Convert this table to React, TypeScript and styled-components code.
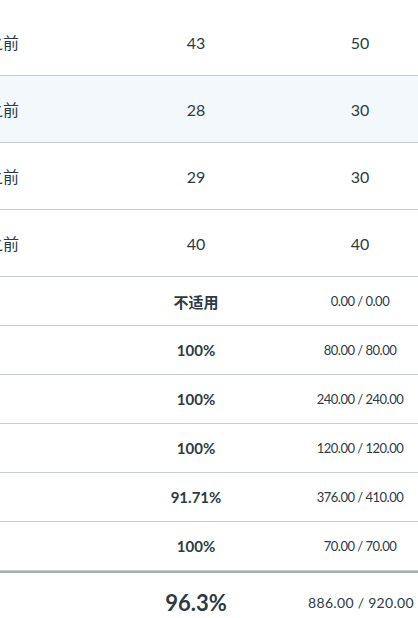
import React from "react";
import styled, { createGlobalStyle } from "styled-components";

const Global = createGlobalStyle`
  html, body { margin: 0; padding: 0; background: #fff; }
  body { font-family: Lato, "Noto Sans CJK SC", "Noto Sans", sans-serif; color: #2d3b45; overflow: hidden; }
`;

const Viewport = styled.div`
  width: 418px;
  height: 618px;
  overflow: hidden;
`;

const Table = styled.div`
  margin-left: -100px;
  width: 518px;
  padding-top: 9px;
  display: flex;
  flex-direction: column;
`;

const Row = styled.div<{ $h: number; $shaded?: boolean; $thick?: boolean }>`
  display: grid;
  grid-template-columns: 190px 212px 116px;
  align-items: center;
  height: ${(p) => p.$h}px;
  background: ${(p) => (p.$shaded ? "#f2f8fc" : "#fff")};
  border-top: ${(p) => (p.$thick ? "2px solid #a5afb5" : "none")};
  border-bottom: ${(p) => (p.$thick ? "none" : "1px solid #c7cdd1")};
  box-sizing: border-box;
`;

const Due = styled.div`
  font-size: 16px;
  text-align: right;
  padding-right: 71px;
  white-space: nowrap;
  margin-top: -1px;
`;

const Score = styled.div<{ $bold?: boolean; $big?: boolean }>`
  text-align: center;
  font-size: ${(p) => (p.$big ? "22px" : p.$bold ? "15px" : "16px")};
  font-weight: ${(p) => (p.$bold || p.$big ? 700 : 400)};
  white-space: nowrap;
`;

const Points = styled.div<{ $small?: boolean }>`
  text-align: center;
  font-size: ${(p) => (p.$small ? "13px" : "16px")};
  white-space: nowrap;
  letter-spacing: ${(p) => (p.$small ? "-0.5px" : "0")};
`;

const Total = styled.div`
  text-align: center;
  font-size: 14px;
  letter-spacing: 0.3px;
  white-space: nowrap;
  padding-left: 2px;
`;

const assignments = [
  { due: "5 天之前", score: "43", out: "50", shaded: false },
  { due: "6 天之前", score: "28", out: "30", shaded: true },
  { due: "8 天之前", score: "29", out: "30", shaded: false },
  { due: "9 天之前", score: "40", out: "40", shaded: false },
];

const groups = [
  { pct: "不适用", pts: "0.00 / 0.00" },
  { pct: "100%", pts: "80.00 / 80.00" },
  { pct: "100%", pts: "240.00 / 240.00" },
  { pct: "100%", pts: "120.00 / 120.00" },
  { pct: "91.71%", pts: "376.00 / 410.00" },
  { pct: "100%", pts: "70.00 / 70.00" },
];

export default function App() {
  return (
    <Viewport>
      <Global />
      <Table>
        {assignments.map((a, i) => (
          <Row key={i} $h={67} $shaded={a.shaded}>
            <Due>{a.due}</Due>
            <Score>{a.score}</Score>
            <Points>{a.out}</Points>
          </Row>
        ))}
        {groups.map((g, i) => (
          <Row key={"g" + i} $h={49}>
            <div />
            <Score $bold>{g.pct}</Score>
            <Points $small>{g.pts}</Points>
          </Row>
        ))}
        <Row $h={60} $thick>
          <div />
          <Score $big>96.3%</Score>
          <Total>886.00 / 920.00</Total>
        </Row>
      </Table>
    </Viewport>
  );
}
